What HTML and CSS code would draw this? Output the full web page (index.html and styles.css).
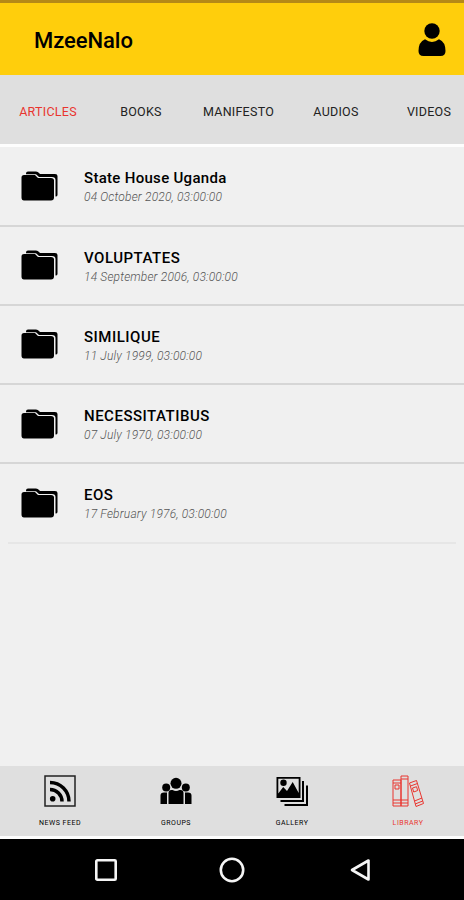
FILE: index.html
```html
<!DOCTYPE html>
<html lang="en">
<head>
    <meta charset="UTF-8">
    <meta name="viewport" content="width=device-width, initial-scale=1.0">
    <title>MzeeNalo</title>
    <link rel="stylesheet" href="styles.css">
</head>
<body>
    <svg class="symbols" width="0" height="0">
        <symbol id="folder" viewBox="0 0 38 32">
            <path d="M5 2.5Q5 .5 7 .5H15Q17 .5 18 2L19 3H34Q36.5 3 36.5 5V24Q36.5 25.5 34.5 25.5V9Q34.5 6 31 6H18L15 3.2H5Z"/>
            <path d="M.5 6.5Q.5 4 3 4H14L17 7H30Q33 7 33 9.5V26.5Q33 29.5 30 29.5H3Q.5 29.5 .5 26.5Z"/>
        </symbol>
    </svg>
    <header class="header">
        <h1 class="title">MzeeNalo</h1>
        <svg class="user" viewBox="0 0 28 34">
            <circle cx="14" cy="8" r="7.7"/>
            <path d="M7 16.3Q14 21.5 21 16.3Q27.5 19 27.5 28Q27.5 33 22.5 33H5.5Q.5 33 .5 28Q.5 19 7 16.3Z"/>
        </svg>
    </header>
    <nav class="tabs">
        <a class="tab active">ARTICLES</a>
        <a class="tab">BOOKS</a>
        <a class="tab">MANIFESTO</a>
        <a class="tab">AUDIOS</a>
        <a class="tab">VIDEOS</a>
    </nav>
    <main class="list">
        <div class="item">
            <svg class="folder"><use href="#folder"/></svg>
            <div class="info">
                <h2 class="name">State House Uganda</h2>
                <p class="date">04 October 2020, 03:00:00</p>
            </div>
        </div>
        <div class="item">
            <svg class="folder"><use href="#folder"/></svg>
            <div class="info">
                <h2 class="name caps">VOLUPTATES</h2>
                <p class="date">14 September 2006, 03:00:00</p>
            </div>
        </div>
        <div class="item">
            <svg class="folder"><use href="#folder"/></svg>
            <div class="info">
                <h2 class="name caps">SIMILIQUE</h2>
                <p class="date">11 July 1999, 03:00:00</p>
            </div>
        </div>
        <div class="item">
            <svg class="folder"><use href="#folder"/></svg>
            <div class="info">
                <h2 class="name caps">NECESSITATIBUS</h2>
                <p class="date">07 July 1970, 03:00:00</p>
            </div>
        </div>
        <div class="item last">
            <svg class="folder"><use href="#folder"/></svg>
            <div class="info">
                <h2 class="name caps">EOS</h2>
                <p class="date">17 February 1976, 03:00:00</p>
            </div>
        </div>
    </main>
    <footer class="menu">
        <a class="menu-item">
            <svg class="menu-icon" viewBox="0 0 32 32">
                <rect x="1" y="1" width="30" height="30" fill="none" stroke="#222" stroke-width="1.5"/>
                <circle cx="8.7" cy="23.7" r="2.8"/>
                <path d="M6 14.5A12 12 0 0 1 18 26.5M6 7.5A19 19 0 0 1 25 26.5" fill="none" stroke="#000" stroke-width="3.5"/>
            </svg>
            <span class="label">NEWS FEED</span>
        </a>
        <a class="menu-item">
            <svg class="menu-icon" viewBox="0 0 32 32">
                <circle cx="16" cy="8.3" r="5.5"/>
                <circle cx="6.2" cy="12.4" r="4"/>
                <circle cx="25.8" cy="12.4" r="4"/>
                <path d="M8.5 29V18Q8.5 15 11.5 15H12.5Q16 17 19.5 15H20.5Q23.5 15 23.5 18V29Z"/>
                <path d="M.5 29V20.5Q.5 17.5 4 17.5H7V29ZM25 29V17.5H28Q31.5 17.5 31.5 20.5V29Z"/>
            </svg>
            <span class="label">GROUPS</span>
        </a>
        <a class="menu-item">
            <svg class="menu-icon" viewBox="0 0 32 32">
                <path fill-rule="evenodd" d="M.5 2H24.5V23H.5ZM2.3 3.7V18.5L7.2 12L11 16L16.7 7L22.7 18V3.7Z"/>
                <circle cx="7.5" cy="7.7" r="3.2"/>
                <path d="M26 6H28V27H4.5V25H26ZM30 10.5H32V31H8.5V29H30Z"/>
            </svg>
            <span class="label">GALLERY</span>
        </a>
        <a class="menu-item active">
            <svg class="menu-icon" viewBox="0 0 32 32" fill="none" stroke="#e9352f" stroke-width="1">
                <path d="M1 5H9V31H1ZM1 8H9M1 25H9M1 28H9M3 10H7V14H3Z"/>
                <path d="M9 1H16V31H9ZM9 4H16M9 25H16M9 28H16"/>
                <path d="M17.5 8L24.5 5.5L31.5 28.5L24 31.5ZM18.5 11L25.5 8.5M22.5 26L30 23M23.2 29L30.7 26M20.5 13L24.5 11.7L25.7 15.5L21.7 17Z"/>
            </svg>
            <span class="label">LIBRARY</span>
        </a>
    </footer>
    <div class="system">
        <svg class="system-icon" viewBox="0 0 26 26"><rect x="3.3" y="3.3" width="19.4" height="19.4" rx="1"/></svg>
        <svg class="system-icon" viewBox="0 0 26 26"><circle cx="13" cy="13" r="11.2"/></svg>
        <svg class="system-icon" viewBox="0 0 26 26"><path d="M23.5 3.5V22.5L7 13Z"/></svg>
    </div>
</body>
</html>
```
FILE: styles.css
```css
body {
    font-family: Roboto, Arial, sans-serif;
    background-color: #f0f0f0;
    color: #000;
    display: flex;
    flex-direction: column;
    height: 900px;
    margin: 0;
    overflow: hidden;
}
h1, h2, p {
    margin: 0;
}
.symbols {
    display: none;
}
.header {
    flex: none;
    box-sizing: border-box;
    height: 75px;
    padding: 0 18px 0 34px;
    display: flex;
    justify-content: space-between;
    align-items: center;
    background-color: #ffce0c;
    border-top: 3px solid #b58917;
}
.title {
    font-size: 22px;
    font-weight: 500;
    line-height: 26px;
    letter-spacing: -0.05px;
    padding-top: 3px;
}
.user {
    width: 28px;
    height: 34px;
    padding-top: 1px;
}
.tabs {
    flex: none;
    height: 69px;
    display: grid;
    grid-template-columns: 96px 90px 105px 90px 96px;
    align-items: center;
    background-color: #dfdfdf;
    border-bottom: 3px solid #fdfdfd;
    font-size: 12.5px;
    letter-spacing: 0.25px;
    color: #222;
}
.tab {
    text-align: center;
    padding-top: 4px;
}
.active {
    color: #e9352f;
}
.list {
    flex: 1;
}
.item {
    box-sizing: border-box;
    height: 79.25px;
    padding: 2px 0 0 21px;
    display: flex;
    align-items: center;
    border-bottom: 2px solid #d6d6d6;
}
.item:first-child {
    height: 79.5px;
}
.item.last {
    margin: 0 8px;
    padding-left: 13px;
    border-color: #e6e6e6;
}
.folder {
    width: 38px;
    height: 32px;
    margin-right: 25px;
}
.info {
    padding-top: 2px;
}
.name {
    font-size: 15px;
    font-weight: 500;
    line-height: 20px;
    letter-spacing: 0.3px;
}
.name.caps {
    letter-spacing: 0.5px;
}
.date {
    font-size: 12px;
    font-style: italic;
    font-weight: 300;
    line-height: 19px;
    letter-spacing: 0.17px;
    color: #555;
}
.menu {
    flex: none;
    height: 70px;
    display: grid;
    grid-template-columns: repeat(4, 116px);
    padding-left: 2px;
    background-color: #dfdfdf;
    border-bottom: 3px solid #fdfdfd;
}
.menu-item {
    display: flex;
    flex-direction: column;
    align-items: center;
    padding-top: 9px;
}
.menu-icon {
    width: 32px;
    height: 32px;
}
.label {
    font-size: 7px;
    line-height: 10px;
    letter-spacing: 0.5px;
    margin-top: 11px;
}
.system {
    flex: none;
    height: 61px;
    display: flex;
    justify-content: center;
    align-items: center;
    gap: 100px;
    background-color: #000;
}
.system-icon {
    width: 26px;
    height: 26px;
    fill: none;
    stroke: #f5f5f5;
    stroke-width: 2.6;
    stroke-linejoin: round;
}
```
